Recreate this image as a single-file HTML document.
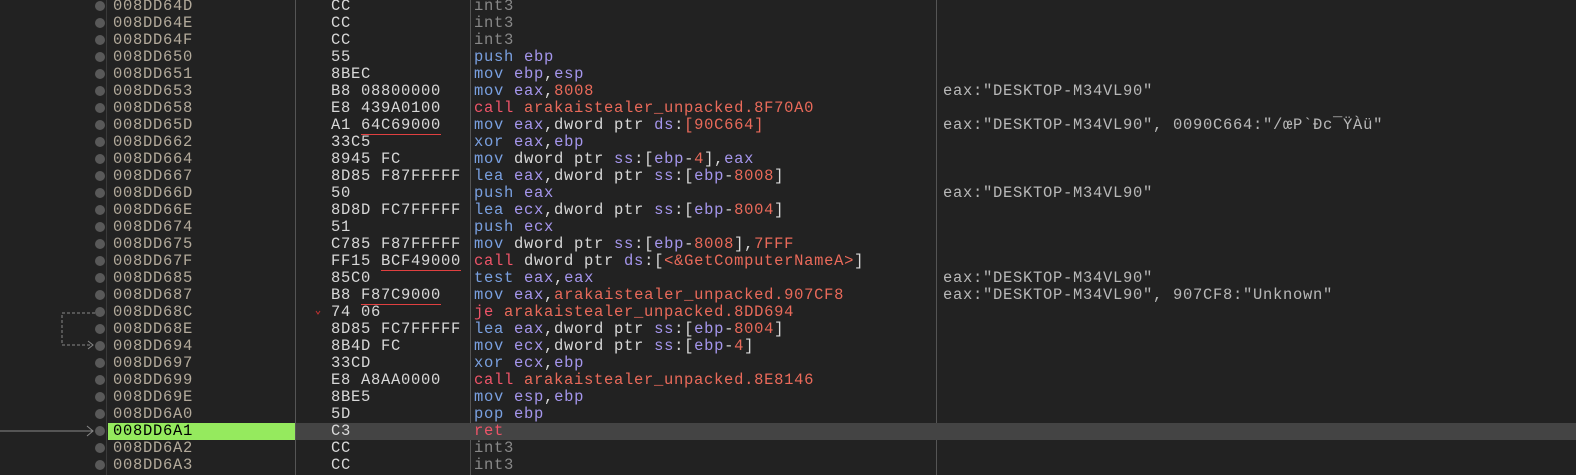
<!DOCTYPE html>
<html><head><meta charset="utf-8"><style>
body{margin:0;width:1576px;height:475px;background:#222;overflow:hidden;position:relative;font-family:"Liberation Mono",monospace;font-size:15.5px;letter-spacing:0.7px}
.r{position:absolute;left:0;width:1576px;height:17px;line-height:17px;white-space:pre}
.r span{position:absolute;top:0}
.r i{font-style:normal}
.a{left:113px;color:#b3aa9b}
.b{left:331px;color:#d8d8d8}
.i{left:474px;color:#d8d8d8}
.c{left:943px;color:#b8b8b8}
.dot{position:absolute;left:95px;width:10px;height:10px;border-radius:50%;background:#595959;top:3px}
.vl{position:absolute;top:0;height:475px;width:1px;background:#555}
.m{color:#7aa0e0}.g{color:#a596ec}.n{color:#ea6a5a}.k{color:#ee5468}.x{color:#888}
.u{border-bottom:1px solid #e04040;text-decoration:none}
</style></head><body>
<div class="vl" style="left:106px;background:#3a3a3a"></div>
<div class="vl" style="left:295px"></div>
<div class="vl" style="left:470px"></div>
<div class="vl" style="left:936px"></div>
<div style="position:absolute;left:296px;top:423px;width:1280px;height:17px;background:#444"></div>
<div style="position:absolute;left:108px;top:423px;width:187px;height:17px;background:#95ea5e"></div>
<svg style="position:absolute;left:0;top:0" width="330" height="475">
<path d="M95 313H62V345H92" stroke="#888" fill="none" stroke-dasharray="3,2"/>
<path d="M88 341L93 345L88 349" stroke="#888" fill="none"/>
<path d="M0 431H93" stroke="#888" fill="none"/>
<path d="M87 426L93 431L87 436" stroke="#888" fill="none"/>
<path d="M316 311l2 3 2-3" stroke="#c03030" fill="none"/>
</svg>
<div class="r" style="top:-2px"><i class="dot"></i><span class="a">008DD64D</span><span class="b">CC</span><span class="i x">int3</span></div>
<div class="r" style="top:15px"><i class="dot"></i><span class="a">008DD64E</span><span class="b">CC</span><span class="i x">int3</span></div>
<div class="r" style="top:32px"><i class="dot"></i><span class="a">008DD64F</span><span class="b">CC</span><span class="i x">int3</span></div>
<div class="r" style="top:49px"><i class="dot"></i><span class="a">008DD650</span><span class="b">55</span><span class="i"><i class="m">push</i> <i class="g">ebp</i></span></div>
<div class="r" style="top:66px"><i class="dot"></i><span class="a">008DD651</span><span class="b">8BEC</span><span class="i"><i class="m">mov</i> <i class="g">ebp</i>,<i class="g">esp</i></span></div>
<div class="r" style="top:83px"><i class="dot"></i><span class="a">008DD653</span><span class="b">B8 08800000</span><span class="i"><i class="m">mov</i> <i class="g">eax</i>,<i class="n">8008</i></span><span class="c">eax:"DESKTOP-M34VL90"</span></div>
<div class="r" style="top:100px"><i class="dot"></i><span class="a">008DD658</span><span class="b">E8 439A0100</span><span class="i"><i class="k">call</i> <i class="n">arakaistealer_unpacked.8F70A0</i></span></div>
<div class="r" style="top:117px"><i class="dot"></i><span class="a">008DD65D</span><span class="b">A1 <u class="u">64C69000</u></span><span class="i"><i class="m">mov</i> <i class="g">eax</i>,dword ptr <i class="g">ds</i>:<i class="n">[90C664]</i></span><span class="c">eax:"DESKTOP-M34VL90", 0090C664:"/œP`Ðc¯ŸÀü"</span></div>
<div class="r" style="top:134px"><i class="dot"></i><span class="a">008DD662</span><span class="b">33C5</span><span class="i"><i class="m">xor</i> <i class="g">eax</i>,<i class="g">ebp</i></span></div>
<div class="r" style="top:151px"><i class="dot"></i><span class="a">008DD664</span><span class="b">8945 FC</span><span class="i"><i class="m">mov</i> dword ptr <i class="g">ss</i>:[<i class="g">ebp</i>-<i class="n">4</i>],<i class="g">eax</i></span></div>
<div class="r" style="top:168px"><i class="dot"></i><span class="a">008DD667</span><span class="b">8D85 F87FFFFF</span><span class="i"><i class="m">lea</i> <i class="g">eax</i>,dword ptr <i class="g">ss</i>:[<i class="g">ebp</i>-<i class="n">8008</i>]</span></div>
<div class="r" style="top:185px"><i class="dot"></i><span class="a">008DD66D</span><span class="b">50</span><span class="i"><i class="m">push</i> <i class="g">eax</i></span><span class="c">eax:"DESKTOP-M34VL90"</span></div>
<div class="r" style="top:202px"><i class="dot"></i><span class="a">008DD66E</span><span class="b">8D8D FC7FFFFF</span><span class="i"><i class="m">lea</i> <i class="g">ecx</i>,dword ptr <i class="g">ss</i>:[<i class="g">ebp</i>-<i class="n">8004</i>]</span></div>
<div class="r" style="top:219px"><i class="dot"></i><span class="a">008DD674</span><span class="b">51</span><span class="i"><i class="m">push</i> <i class="g">ecx</i></span></div>
<div class="r" style="top:236px"><i class="dot"></i><span class="a">008DD675</span><span class="b">C785 F87FFFFF</span><span class="i"><i class="m">mov</i> dword ptr <i class="g">ss</i>:[<i class="g">ebp</i>-<i class="n">8008</i>],<i class="n">7FFF</i></span></div>
<div class="r" style="top:253px"><i class="dot"></i><span class="a">008DD67F</span><span class="b">FF15 <u class="u">BCF49000</u></span><span class="i"><i class="k">call</i> dword ptr <i class="g">ds</i>:[<i class="n">&lt;&amp;GetComputerNameA&gt;</i>]</span></div>
<div class="r" style="top:270px"><i class="dot"></i><span class="a">008DD685</span><span class="b">85C0</span><span class="i"><i class="m">test</i> <i class="g">eax</i>,<i class="g">eax</i></span><span class="c">eax:"DESKTOP-M34VL90"</span></div>
<div class="r" style="top:287px"><i class="dot"></i><span class="a">008DD687</span><span class="b">B8 <u class="u">F87C9000</u></span><span class="i"><i class="m">mov</i> <i class="g">eax</i>,<i class="n">arakaistealer_unpacked.907CF8</i></span><span class="c">eax:"DESKTOP-M34VL90", 907CF8:"Unknown"</span></div>
<div class="r" style="top:304px"><i class="dot"></i><span class="a">008DD68C</span><span class="b">74 06</span><span class="i"><i class="k">je</i> <i class="n">arakaistealer_unpacked.8DD694</i></span></div>
<div class="r" style="top:321px"><i class="dot"></i><span class="a">008DD68E</span><span class="b">8D85 FC7FFFFF</span><span class="i"><i class="m">lea</i> <i class="g">eax</i>,dword ptr <i class="g">ss</i>:[<i class="g">ebp</i>-<i class="n">8004</i>]</span></div>
<div class="r" style="top:338px"><i class="dot"></i><span class="a">008DD694</span><span class="b">8B4D FC</span><span class="i"><i class="m">mov</i> <i class="g">ecx</i>,dword ptr <i class="g">ss</i>:[<i class="g">ebp</i>-<i class="n">4</i>]</span></div>
<div class="r" style="top:355px"><i class="dot"></i><span class="a">008DD697</span><span class="b">33CD</span><span class="i"><i class="m">xor</i> <i class="g">ecx</i>,<i class="g">ebp</i></span></div>
<div class="r" style="top:372px"><i class="dot"></i><span class="a">008DD699</span><span class="b">E8 A8AA0000</span><span class="i"><i class="k">call</i> <i class="n">arakaistealer_unpacked.8E8146</i></span></div>
<div class="r" style="top:389px"><i class="dot"></i><span class="a">008DD69E</span><span class="b">8BE5</span><span class="i"><i class="m">mov</i> <i class="g">esp</i>,<i class="g">ebp</i></span></div>
<div class="r" style="top:406px"><i class="dot"></i><span class="a">008DD6A0</span><span class="b">5D</span><span class="i"><i class="m">pop</i> <i class="g">ebp</i></span></div>
<div class="r" style="top:423px"><i class="dot"></i><span class="a" style="color:#000">008DD6A1</span><span class="b">C3</span><span class="i k">ret</span></div>
<div class="r" style="top:440px"><i class="dot"></i><span class="a">008DD6A2</span><span class="b">CC</span><span class="i x">int3</span></div>
<div class="r" style="top:457px"><i class="dot"></i><span class="a">008DD6A3</span><span class="b">CC</span><span class="i x">int3</span></div>
</body></html>
